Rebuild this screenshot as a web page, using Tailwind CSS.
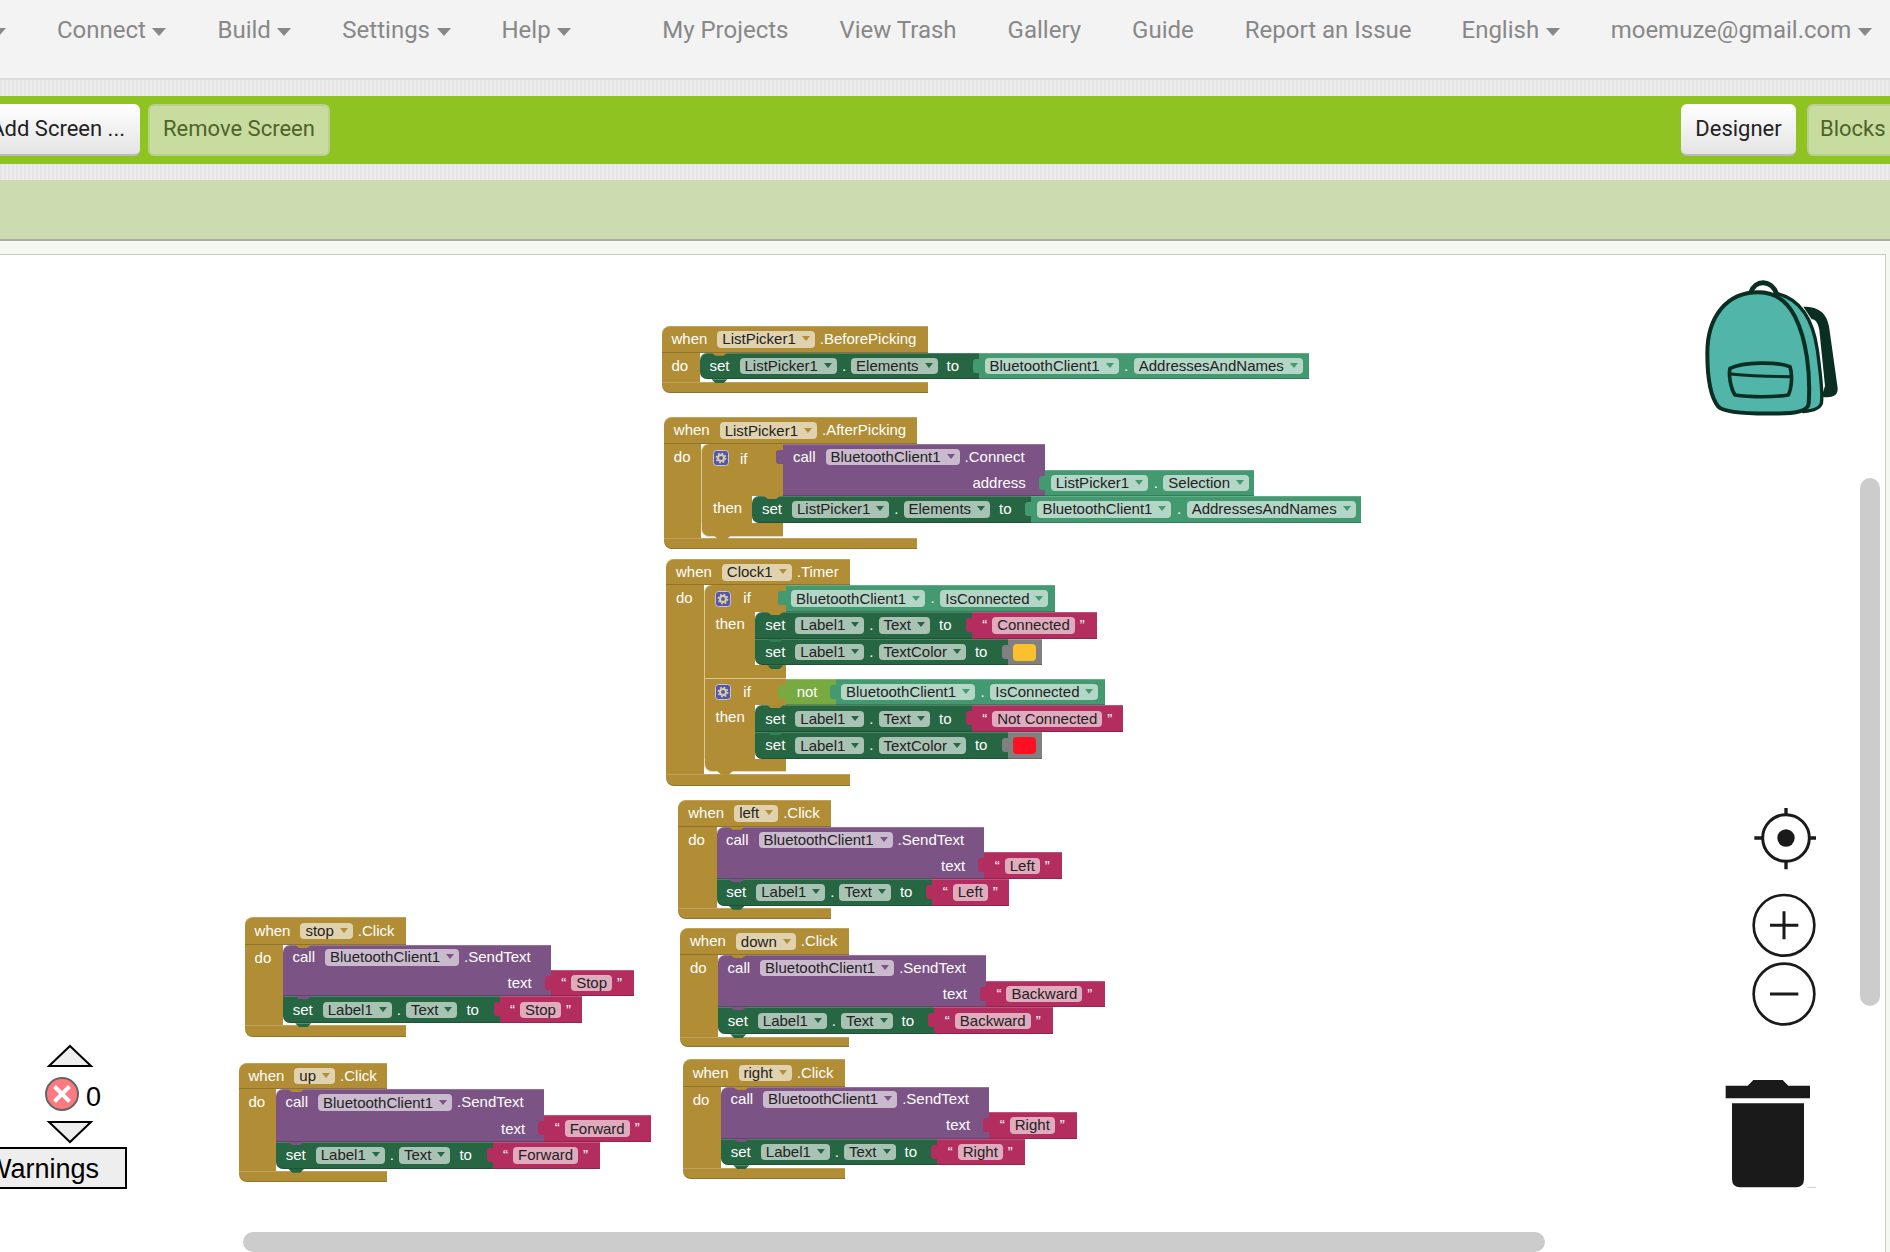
<!DOCTYPE html>
<html lang="en">
<head>
<meta charset="utf-8">
<title>App Inventor Blocks</title>
<script src="https://cdn.jsdelivr.net/npm/@tailwindcss/browser@4"></script>
</head>
<body class="bg-white">
<div class="relative w-[1890px] h-[1252px] overflow-hidden flex flex-col bg-[#f5f8f0] font-['Roboto',sans-serif]">

  <nav class="h-[80px] shrink-0 bg-[#f3f3f3] border-b-2 border-[#dcdcdc] flex items-start gap-[51px] pt-[18px] text-[24px] leading-[24px] text-[#888] whitespace-nowrap [&_s]:w-0 [&_s]:h-0 [&_s]:border-x-[7px] [&_s]:border-x-transparent [&_s]:border-t-[8px] [&_s]:border-t-[#888] [&_s]:ml-[6.5px] [&_s]:mt-[10px] [&_a]:flex [&_a]:items-start">
    <a class="-ml-[8px]"><s class="!ml-0"></s></a>
    <a>Connect<s></s></a>
    <a>Build<s></s></a>
    <a>Settings<s></s></a>
    <a class="mr-[40px]">Help<s></s></a>
    <a>My Projects</a>
    <a>View Trash</a>
    <a>Gallery</a>
    <a>Guide</a>
    <a class="-mr-[1px]">Report an Issue</a>
    <a>English<s></s></a>
    <a>moemuze@gmail.com<s></s></a>
  </nav>
  <div class="h-[16px] shrink-0 bg-[repeating-linear-gradient(90deg,#e6e6e6_0_2px,#ececec_2px_4px)]"></div>
  <div class="h-[68px] shrink-0 bg-[#8fc322] flex items-center justify-between text-[22px] overflow-hidden">
    <div class="flex items-center gap-[8px] -ml-[25px]">
      <button class="w-[165px] h-[52px] pb-[2px] rounded-[6px] bg-gradient-to-b from-white to-[#e4e4e4] border-b-2 border-[#bbb] text-right pr-[15px] text-[#222]">Add Screen ...</button>
      <button class="w-[182px] h-[52px] pb-[3px] rounded-[6px] bg-[#c8dca0] border-2 border-[#b8d08c] text-[#4f6329]">Remove Screen</button>
    </div>
    <div class="flex items-center gap-[11px] -mr-[31px]">
      <button class="w-[115px] h-[52px] pb-[2px] rounded-[6px] bg-gradient-to-b from-white to-[#e4e4e4] border-b-2 border-[#bbb] text-[#222]">Designer</button>
      <button class="w-[114px] h-[52px] pb-[3px] rounded-[6px] bg-[#c8dca0] border-2 border-[#b8d08c] text-[#4f6329] text-left pl-[11px]">Blocks</button>
    </div>
  </div>
  <div class="h-[16px] shrink-0 bg-[repeating-linear-gradient(90deg,#e6e6e6_0_2px,#ececec_2px_4px)]"></div>
  <div class="h-[61px] shrink-0 bg-[#cddbb0] border-b-2 border-[#aaa]"></div>
  <div class="flex-1 pt-[13px] pr-[4px] overflow-hidden">
    <div class="h-full bg-white border-t border-r border-[#c8cdc4]"></div>
  </div>

  <!-- workspace -->
  <div class="absolute inset-0 pointer-events-none overflow-hidden font-['Liberation_Sans',sans-serif] text-[15px] leading-none text-white whitespace-nowrap
    [&_mark]:inline-flex [&_mark]:items-center [&_mark]:gap-[6px] [&_mark]:h-[16.5px] [&_mark]:px-[5px] [&_mark]:pb-[1px] [&_mark]:rounded-[4px] [&_mark]:bg-white/60 [&_mark]:text-[#222]
    [&_span]:pb-[1.5px]
    [&_s]:w-0 [&_s]:h-0 [&_s]:border-x-[4px] [&_s]:border-x-transparent [&_s]:border-t-[5px] [&_s]:border-t-[var(--c)]
    [&_i]:absolute [&_i]:right-full [&_i]:top-[6px] [&_i]:w-[6px] [&_i]:h-[14px] [&_i]:rounded-l-[3px] [&_i]:bg-inherit
    [&_u]:absolute [&_u]:left-[12px] [&_u]:top-full [&_u]:w-[16px] [&_u]:h-[4px] [&_u]:bg-inherit [&_u]:[clip-path:polygon(0_0,100%_0,75%_100%,25%_100%)]
    [&_em]:absolute [&_em]:left-[12px] [&_em]:top-0 [&_em]:w-[16px] [&_em]:h-[3px] [&_em]:[clip-path:polygon(0_0,100%_0,75%_100%,25%_100%)]
    [&_[data-b]]:shadow-[inset_0_1px_0_#ffffff30,inset_0_-1px_0_#00000030]">

    <svg class="hidden"><symbol id="gear" viewBox="0 0 16 16"><rect x=".5" y=".5" width="15" height="15" rx="3" fill="#5457a8" stroke="#c9c3dc"/><circle cx="8" cy="8" r="3" fill="none" stroke="#d8cfa8" stroke-width="2"/><circle cx="8" cy="8" r="4.6" fill="none" stroke="#d8cfa8" stroke-width="1.6" stroke-dasharray="1.8 1.8"/></symbol></svg>

    <!-- BeforePicking -->
    <div class="absolute left-[661.5px] top-[326px]">
      <div data-b class="flex items-center gap-[5px] w-[266.5px] h-[26.7px] pl-[10px] bg-[#b18e35] [--c:#b18e35] rounded-tl-[8px]"><span class="mr-[5px]">when</span><mark>ListPicker1<s></s></mark><span>.BeforePicking</span></div>
      <div class="flex">
        <div class="w-[38px] bg-[#b18e35] pl-[10px] pt-[5px]">do</div>
        <div class="flex pb-[3px]">
          <div data-b class="relative flex items-center gap-[5px] w-[279px] h-[26.5px] pl-[10px] bg-[#266643] [--c:#266643] rounded-l-[7px]"><em class="bg-[#b18e35]"></em><u></u><span class="mr-[5px]">set</span><mark>ListPicker1<s></s></mark><span>.</span><mark>Elements<s></s></mark><span class="ml-[4px]">to</span></div>
          <div data-b class="relative flex items-center gap-[5.5px] w-[330.5px] h-[26.5px] pl-[6px] bg-[#439970] [--c:#439970]"><i></i><mark>BluetoothClient1<s></s></mark><span>.</span><mark>AddressesAndNames<s></s></mark></div>
        </div>
      </div>
      <div data-b class="w-[266.5px] h-[11px] bg-[#b18e35] rounded-bl-[8px]"></div>
    </div>

    <!-- AfterPicking -->
    <div class="absolute left-[663.8px] top-[417.3px]">
      <div data-b class="flex items-center gap-[5px] w-[253.2px] h-[26.7px] pl-[10px] bg-[#b18e35] [--c:#b18e35] rounded-tl-[8px]"><span class="mr-[5px]">when</span><mark>ListPicker1<s></s></mark><span>.AfterPicking</span></div>
      <div class="flex">
        <div class="w-[37.6px] bg-[#b18e35] pl-[10px] pt-[5px]">do</div>
        <div class="flex flex-col pb-[1.5px]">
          <div class="flex items-end">
            <div class="flex items-start gap-[11px] w-[81.6px] h-[52px] pl-[10.6px] pt-[6px] bg-[#b18e35] rounded-tl-[8px] border-l border-[#d9c795]"><svg class="w-[16px] h-[16px]"><use href="#gear"/></svg><span class="pt-[1px]">if</span></div>
            <div data-b class="relative flex flex-col w-[261.8px] h-[52px] pl-[10px] pr-[19px] bg-[#7c5385] [--c:#7c5385]"><i class="!w-[7px]"></i>
              <div class="flex items-center gap-[5px] h-[26px]"><span class="mr-[5px]">call</span><mark>BluetoothClient1<s></s></mark><span>.Connect</span></div>
              <div class="flex items-center justify-end h-[26px]"><span>address</span></div>
            </div>
            <div data-b class="relative flex items-center gap-[5.5px] w-[209px] h-[26px] pl-[6px] bg-[#439970] [--c:#439970]"><i></i><mark>ListPicker1<s></s></mark><span>.</span><mark>Selection<s></s></mark></div>
          </div>
          <div class="flex">
            <div class="w-[50.6px] pl-[10.6px] pt-[4px] bg-[#b18e35] border-l border-[#d9c795]">then</div>
            <div data-b class="relative flex items-center gap-[5px] w-[279.4px] h-[26.7px] pl-[10px] bg-[#266643] [--c:#266643] rounded-l-[7px]"><em class="bg-[#b18e35]"></em><u></u><span class="mr-[5px]">set</span><mark>ListPicker1<s></s></mark><span>.</span><mark>Elements<s></s></mark><span class="ml-[4px]">to</span></div>
            <div data-b class="relative flex items-center gap-[5.5px] w-[329.7px] h-[26.7px] pl-[6px] bg-[#439970] [--c:#439970]"><i></i><mark>BluetoothClient1<s></s></mark><span>.</span><mark>AddressesAndNames<s></s></mark></div>
          </div>
          <div class="relative w-[81.6px] h-[14px] bg-[#b18e35] rounded-bl-[8px] border-l border-b border-[#e6d9b4]"><u></u></div>
        </div>
      </div>
      <div data-b class="w-[253.2px] h-[11.3px] bg-[#b18e35] rounded-bl-[8px]"></div>
    </div>

    <!-- Clock1.Timer -->
    <div class="absolute left-[666px] top-[559.3px]">
      <div data-b class="flex items-center gap-[5px] w-[184px] h-[26px] pl-[10px] bg-[#b18e35] [--c:#b18e35] rounded-tl-[8px]"><span class="mr-[5px]">when</span><mark>Clock1<s></s></mark><span>.Timer</span></div>
      <div class="flex">
        <div class="w-[38px] bg-[#b18e35] pl-[10px] pt-[5px]">do</div>
        <div class="flex flex-col pb-[2.6px]">
          <div class="flex flex-col">
            <div class="flex">
              <div class="flex items-center gap-[12px] w-[82px] h-[26.7px] pl-[10.3px] bg-[#b18e35] rounded-tl-[8px] border-l border-[#d9c795]"><svg class="w-[16px] h-[16px]"><use href="#gear"/></svg><span>if</span></div>
              <div data-b class="relative flex items-center gap-[5.5px] w-[268.7px] h-[26.7px] pl-[5px] bg-[#439970] [--c:#439970]"><i class="!w-[8px]"></i><mark>BluetoothClient1<s></s></mark><span>.</span><mark>IsConnected<s></s></mark></div>
            </div>
            <div class="flex">
              <div class="w-[51.3px] pl-[10.6px] pt-[4px] bg-[#b18e35] border-l border-[#d9c795]">then</div>
              <div class="flex flex-col">
                <div class="flex">
                  <div data-b class="relative flex items-center gap-[5px] w-[216.4px] h-[27px] pl-[10px] bg-[#266643] [--c:#266643] rounded-tl-[7px]"><em class="bg-[#b18e35]"></em><span class="mr-[5px]">set</span><mark>Label1<s></s></mark><span>.</span><mark>Text<s></s></mark><span class="ml-[4px]">to</span></div>
                  <div data-b class="relative flex items-center gap-[5px] w-[125px] h-[27px] pl-[10.5px] bg-[#b32d5e]"><i></i><span>“</span><mark>Connected</mark><span>”</span></div>
                </div>
                <div class="flex">
                  <div data-b class="relative flex items-center gap-[5px] w-[252.4px] h-[26.3px] pl-[10px] bg-[#266643] [--c:#266643] rounded-bl-[7px]"><em class="bg-[#266643] brightness-125"></em><u></u><span class="mr-[5px]">set</span><mark>Label1<s></s></mark><span>.</span><mark>TextColor<s></s></mark><span class="ml-[4px]">to</span></div>
                  <div data-b class="relative flex items-center w-[34px] h-[26.3px] pl-[5px] bg-[#808080]"><i></i><div class="w-[23px] h-[17px] rounded-[4px] bg-[#fbc02d]"></div></div>
                </div>
              </div>
            </div>
            <div class="w-[82px] h-[13.4px] bg-[#b18e35] border-l border-b border-[#d9c795]"></div>
          </div>
          <div class="flex flex-col">
            <div class="flex">
              <div class="flex items-center gap-[12px] w-[82px] h-[26.7px] pl-[10.3px] bg-[#b18e35] border-l border-[#d9c795]"><svg class="w-[16px] h-[16px]"><use href="#gear"/></svg><span>if</span></div>
              <div data-b class="relative flex items-center w-[50px] h-[26.7px] pl-[10.7px] bg-[#77ab41]"><i class="!w-[8px]"></i><span>not</span></div>
              <div data-b class="relative flex items-center gap-[5.5px] w-[269.3px] h-[26.7px] pl-[5px] bg-[#439970] [--c:#439970]"><i></i><mark>BluetoothClient1<s></s></mark><span>.</span><mark>IsConnected<s></s></mark></div>
            </div>
            <div class="flex">
              <div class="w-[51.3px] pl-[10.6px] pt-[4px] bg-[#b18e35] border-l border-[#d9c795]">then</div>
              <div class="flex flex-col">
                <div class="flex">
                  <div data-b class="relative flex items-center gap-[5px] w-[216.4px] h-[27px] pl-[10px] bg-[#266643] [--c:#266643] rounded-tl-[7px]"><em class="bg-[#b18e35]"></em><span class="mr-[5px]">set</span><mark>Label1<s></s></mark><span>.</span><mark>Text<s></s></mark><span class="ml-[4px]">to</span></div>
                  <div data-b class="relative flex items-center gap-[5px] w-[151.6px] h-[27px] pl-[10.5px] bg-[#b32d5e]"><i></i><span>“</span><mark>Not Connected</mark><span>”</span></div>
                </div>
                <div class="flex">
                  <div data-b class="relative flex items-center gap-[5px] w-[252.4px] h-[26.7px] pl-[10px] bg-[#266643] [--c:#266643] rounded-bl-[7px]"><em class="bg-[#266643] brightness-125"></em><u></u><span class="mr-[5px]">set</span><mark>Label1<s></s></mark><span>.</span><mark>TextColor<s></s></mark><span class="ml-[4px]">to</span></div>
                  <div data-b class="relative flex items-center w-[34px] h-[26.7px] pl-[5px] bg-[#808080]"><i></i><div class="w-[23px] h-[17px] rounded-[4px] bg-[#ff1020]"></div></div>
                </div>
              </div>
            </div>
            <div class="relative w-[82px] h-[12.7px] bg-[#b18e35] rounded-bl-[8px] border-l border-b border-[#e6d9b4]"><u></u></div>
          </div>
        </div>
      </div>
      <div data-b class="w-[184px] h-[11.4px] bg-[#b18e35] rounded-bl-[8px]"></div>
    </div>

    <!-- left.Click -->
    <div class="absolute left-[677.7px] top-[800px]">
      <div data-b class="flex items-center gap-[5px] w-[153px] h-[26.7px] pl-[10.6px] bg-[#b18e35] [--c:#b18e35] rounded-tl-[8px]"><span class="mr-[5px]">when</span><mark>left<s></s></mark><span>.Click</span></div>
      <div class="flex">
        <div class="w-[39px] bg-[#b18e35] pl-[10.6px] pt-[5px]">do</div>
        <div class="flex flex-col pb-[2.6px]">
          <div class="flex items-end">
            <div data-b class="relative flex flex-col w-[267.6px] h-[52.6px] pl-[9.3px] pr-[19px] bg-[#7c5385] [--c:#7c5385] rounded-tl-[7px]"><em class="bg-[#b18e35]"></em>
              <div class="flex items-center gap-[5px] h-[26.6px]"><span class="mr-[5px]">call</span><mark>BluetoothClient1<s></s></mark><span>.SendText</span></div>
              <div class="flex items-center justify-end h-[25px]"><span>text</span></div>
            </div>
            <div data-b class="relative flex items-center gap-[5px] w-[77.4px] h-[27px] pl-[10.5px] bg-[#b32d5e]"><i></i><span>“</span><mark>Left</mark><span>”</span></div>
          </div>
          <div class="flex">
            <div data-b class="relative flex items-center gap-[5px] w-[215.6px] h-[26.4px] pl-[9.5px] bg-[#266643] [--c:#266643] rounded-bl-[7px]"><em class="bg-[#7c5385]"></em><u></u><span class="mr-[5px]">set</span><mark>Label1<s></s></mark><span>.</span><mark>Text<s></s></mark><span class="ml-[4px]">to</span></div>
            <div data-b class="relative flex items-center gap-[5px] w-[77px] h-[26.4px] pl-[10.5px] bg-[#b32d5e]"><i></i><span>“</span><mark>Left</mark><span>”</span></div>
          </div>
        </div>
      </div>
      <div data-b class="w-[153px] h-[10.7px] bg-[#b18e35] rounded-bl-[8px]"></div>
    </div>

    <!-- down.Click -->
    <div class="absolute left-[680px] top-[928.3px]">
      <div data-b class="flex items-center gap-[5px] w-[168.7px] h-[26.7px] pl-[10px] bg-[#b18e35] [--c:#b18e35] rounded-tl-[8px]"><span class="mr-[5px]">when</span><mark>down<s></s></mark><span>.Click</span></div>
      <div class="flex">
        <div class="w-[38.3px] bg-[#b18e35] pl-[10px] pt-[5px]">do</div>
        <div class="flex flex-col pb-[2.4px]">
          <div class="flex items-end">
            <div data-b class="relative flex flex-col w-[267.7px] h-[52.3px] pl-[9.3px] pr-[19px] bg-[#7c5385] [--c:#7c5385] rounded-tl-[7px]"><em class="bg-[#b18e35]"></em>
              <div class="flex items-center gap-[5px] h-[26px]"><span class="mr-[5px]">call</span><mark>BluetoothClient1<s></s></mark><span>.SendText</span></div>
              <div class="flex items-center justify-end h-[26.3px]"><span>text</span></div>
            </div>
            <div data-b class="relative flex items-center gap-[5px] w-[118.7px] h-[26.6px] pl-[10.5px] bg-[#b32d5e]"><i></i><span>“</span><mark>Backward</mark><span>”</span></div>
          </div>
          <div class="flex">
            <div data-b class="relative flex items-center gap-[5px] w-[216px] h-[27px] pl-[9.5px] bg-[#266643] [--c:#266643] rounded-bl-[7px]"><em class="bg-[#7c5385]"></em><u></u><span class="mr-[5px]">set</span><mark>Label1<s></s></mark><span>.</span><mark>Text<s></s></mark><span class="ml-[4px]">to</span></div>
            <div data-b class="relative flex items-center gap-[5px] w-[118.4px] h-[27px] pl-[10.5px] bg-[#b32d5e]"><i></i><span>“</span><mark>Backward</mark><span>”</span></div>
          </div>
        </div>
      </div>
      <div data-b class="w-[168.7px] h-[10.6px] bg-[#b18e35] rounded-bl-[8px]"></div>
    </div>

    <!-- right.Click -->
    <div class="absolute left-[682.7px] top-[1059.3px]">
      <div data-b class="flex items-center gap-[5px] w-[162.3px] h-[27.7px] pl-[10px] bg-[#b18e35] [--c:#b18e35] rounded-tl-[8px]"><span class="mr-[5px]">when</span><mark>right<s></s></mark><span>.Click</span></div>
      <div class="flex">
        <div class="w-[38.6px] bg-[#b18e35] pl-[10px] pt-[5px]">do</div>
        <div class="flex flex-col pb-[2.4px]">
          <div class="flex items-end">
            <div data-b class="relative flex flex-col w-[268px] h-[51.7px] pl-[9.3px] pr-[19px] bg-[#7c5385] [--c:#7c5385] rounded-tl-[7px]"><em class="bg-[#b18e35]"></em>
              <div class="flex items-center gap-[5px] h-[25px]"><span class="mr-[5px]">call</span><mark>BluetoothClient1<s></s></mark><span>.SendText</span></div>
              <div class="flex items-center justify-end h-[26.7px]"><span>text</span></div>
            </div>
            <div data-b class="relative flex items-center gap-[5px] w-[87.4px] h-[26.7px] pl-[10.5px] bg-[#b32d5e]"><i></i><span>“</span><mark>Right</mark><span>”</span></div>
          </div>
          <div class="flex">
            <div data-b class="relative flex items-center gap-[5px] w-[216px] h-[26.6px] pl-[9.5px] bg-[#266643] [--c:#266643] rounded-bl-[7px]"><em class="bg-[#7c5385]"></em><u></u><span class="mr-[5px]">set</span><mark>Label1<s></s></mark><span>.</span><mark>Text<s></s></mark><span class="ml-[4px]">to</span></div>
            <div data-b class="relative flex items-center gap-[5px] w-[87.4px] h-[26.6px] pl-[10.5px] bg-[#b32d5e]"><i></i><span>“</span><mark>Right</mark><span>”</span></div>
          </div>
        </div>
      </div>
      <div data-b class="w-[162.3px] h-[11px] bg-[#b18e35] rounded-bl-[8px]"></div>
    </div>

    <!-- stop.Click -->
    <div class="absolute left-[244.6px] top-[917.3px]">
      <div data-b class="flex items-center gap-[5px] w-[161.4px] h-[27.7px] pl-[10px] bg-[#b18e35] [--c:#b18e35] rounded-tl-[8px]"><span class="mr-[5px]">when</span><mark>stop<s></s></mark><span>.Click</span></div>
      <div class="flex">
        <div class="w-[38.6px] bg-[#b18e35] pl-[10px] pt-[5px]">do</div>
        <div class="flex flex-col pb-[2px]">
          <div class="flex items-end">
            <div data-b class="relative flex flex-col w-[267.5px] h-[51.3px] pl-[9.3px] pr-[19px] bg-[#7c5385] [--c:#7c5385] rounded-tl-[7px]"><em class="bg-[#b18e35]"></em>
              <div class="flex items-center gap-[5px] h-[25px]"><span class="mr-[5px]">call</span><mark>BluetoothClient1<s></s></mark><span>.SendText</span></div>
              <div class="flex items-center justify-end h-[26.3px]"><span>text</span></div>
            </div>
            <div data-b class="relative flex items-center gap-[5px] w-[83.3px] h-[26.3px] pl-[10.5px] bg-[#b32d5e]"><i></i><span>“</span><mark>Stop</mark><span>”</span></div>
          </div>
          <div class="flex">
            <div data-b class="relative flex items-center gap-[5px] w-[216.4px] h-[27px] pl-[9.5px] bg-[#266643] [--c:#266643] rounded-bl-[7px]"><em class="bg-[#7c5385]"></em><u></u><span class="mr-[5px]">set</span><mark>Label1<s></s></mark><span>.</span><mark>Text<s></s></mark><span class="ml-[4px]">to</span></div>
            <div data-b class="relative flex items-center gap-[5px] w-[82.4px] h-[27px] pl-[10.5px] bg-[#b32d5e]"><i></i><span>“</span><mark>Stop</mark><span>”</span></div>
          </div>
        </div>
      </div>
      <div data-b class="w-[161.4px] h-[11.4px] bg-[#b18e35] rounded-bl-[8px]"></div>
    </div>

    <!-- up.Click -->
    <div class="absolute left-[238.5px] top-[1063px]">
      <div data-b class="flex items-center gap-[5px] w-[148.7px] h-[26.3px] pl-[10px] bg-[#b18e35] [--c:#b18e35] rounded-tl-[8px]"><span class="mr-[5px]">when</span><mark>up<s></s></mark><span>.Click</span></div>
      <div class="flex">
        <div class="w-[37.7px] bg-[#b18e35] pl-[10px] pt-[5px]">do</div>
        <div class="flex flex-col pb-[2px]">
          <div class="flex items-end">
            <div data-b class="relative flex flex-col w-[268px] h-[52.7px] pl-[9.3px] pr-[19px] bg-[#7c5385] [--c:#7c5385] rounded-tl-[7px]"><em class="bg-[#b18e35]"></em>
              <div class="flex items-center gap-[5px] h-[26.6px]"><span class="mr-[5px]">call</span><mark>BluetoothClient1<s></s></mark><span>.SendText</span></div>
              <div class="flex items-center justify-end h-[26.1px]"><span>text</span></div>
            </div>
            <div data-b class="relative flex items-center gap-[5px] w-[107px] h-[26.7px] pl-[10.5px] bg-[#b32d5e]"><i></i><span>“</span><mark>Forward</mark><span>”</span></div>
          </div>
          <div class="flex">
            <div data-b class="relative flex items-center gap-[5px] w-[216.4px] h-[26.7px] pl-[9.5px] bg-[#266643] [--c:#266643] rounded-bl-[7px]"><em class="bg-[#7c5385]"></em><u></u><span class="mr-[5px]">set</span><mark>Label1<s></s></mark><span>.</span><mark>Text<s></s></mark><span class="ml-[4px]">to</span></div>
            <div data-b class="relative flex items-center gap-[5px] w-[107.6px] h-[26.7px] pl-[10.5px] bg-[#b32d5e]"><i></i><span>“</span><mark>Forward</mark><span>”</span></div>
          </div>
        </div>
      </div>
      <div data-b class="w-[148.7px] h-[11px] bg-[#b18e35] rounded-bl-[8px]"></div>
    </div>

    <!-- warnings indicator -->
    <svg class="absolute left-[46px] top-[1043px] w-[48px] h-[26px]" viewBox="0 0 48 26"><path d="M24 3 L45 23 L3 23 Z" fill="#eeeeee" stroke="#000" stroke-width="2"/></svg>
    <svg class="absolute left-[44px] top-[1076px] w-[36px] h-[36px]" viewBox="0 0 36 36"><circle cx="18" cy="18" r="16" fill="#ff7a80" stroke="#666" stroke-width="2"/><path d="M10.5 10.5 L25.5 25.5 M25.5 10.5 L10.5 25.5" stroke="#fff" stroke-width="4" fill="none"/></svg>
    <div class="absolute left-[86px] top-[1084px] text-[27px] leading-[27px] text-black">0</div>
    <svg class="absolute left-[46px] top-[1119px] w-[48px] h-[26px]" viewBox="0 0 48 26"><path d="M3 3 L45 3 L24 23 Z" fill="#eeeeee" stroke="#000" stroke-width="2"/></svg>
    <div class="absolute left-[-30px] top-[1147px] w-[157px] h-[42px] pt-[2px] bg-[#eeeeee] border-2 border-black flex items-center justify-end pr-[26px] text-[27px] leading-none text-black">Warnings</div>

    <!-- backpack -->
    <svg class="absolute left-[1660px] top-[260px] w-[230px] h-[200px]" viewBox="0 0 690 600">
      <path d="M430 140 C480 140 505 160 510 220 L533 385 C535 410 510 415 485 410 L495 378 L478 210 C473 185 465 178 455 178 Z" fill="#0b2e22"/>
      <path d="M272 98 C285 58 335 58 350 102" fill="none" stroke="#0b2e22" stroke-width="15"/>
      <path d="M350 100 C425 118 460 185 472 270 C480 330 490 400 484 430 C480 445 460 452 430 455 Z" fill="#52b5aa" stroke="#0b2e22" stroke-width="10" stroke-linejoin="round"/>
      <path d="M295 97 C200 97 142 170 142 280 C142 350 150 410 175 440 C195 462 300 462 375 460 C420 458 445 450 446 430 C452 340 440 240 405 170 C380 120 340 97 295 97 Z" fill="#52b5aa" stroke="#0b2e22" stroke-width="12"/>
      <path d="M210 325 C250 305 350 305 390 320 C398 345 395 385 385 405 C340 412 270 412 225 405 C212 385 205 345 210 325 Z" fill="#52b5aa" stroke="#0b2e22" stroke-width="11" stroke-linejoin="round"/>
      <path d="M212 342 C270 348 340 350 390 350" fill="none" stroke="#0b2e22" stroke-width="9"/>
    </svg>

    <!-- controls -->
    <svg class="absolute left-[1660px] top-[780px] w-[230px] h-[472px]" viewBox="0 0 690 1416">
      <g fill="none" stroke="#1a1a1a">
        <circle cx="378" cy="174" r="70" stroke-width="9"/>
        <path d="M378 84 V105 M378 243 V268 M283 174 H308 M448 174 H468" stroke-width="10"/>
        <circle cx="372" cy="436" r="91" stroke-width="8"/>
        <path d="M330 436 H415 M372 394 V478" stroke-width="9"/>
        <circle cx="372" cy="642" r="91" stroke-width="8"/>
        <path d="M330 642 H415" stroke-width="9"/>
      </g>
      <circle cx="378" cy="174" r="26" fill="#1a1a1a"/>
      <path fill="#1a1a1a" d="M197 917 H263 L280 900 H368 L385 917 H450 V955 H197 Z M216 970 H432 V1197 Q432 1222 407 1222 H241 Q216 1222 216 1197 Z"/>
      <path d="M442 1222 H468" stroke="#ccc" stroke-width="3"/>
    </svg>

    <!-- scrollbars -->
    <div class="absolute left-[1860px] top-[478px] w-[20px] h-[528px] rounded-[10px] bg-[#cccccc]"></div>
    <div class="absolute left-[243px] top-[1232px] w-[1302px] h-[20px] rounded-[10px] bg-[#cccccc]"></div>
  </div>
</div>
</body>
</html>
